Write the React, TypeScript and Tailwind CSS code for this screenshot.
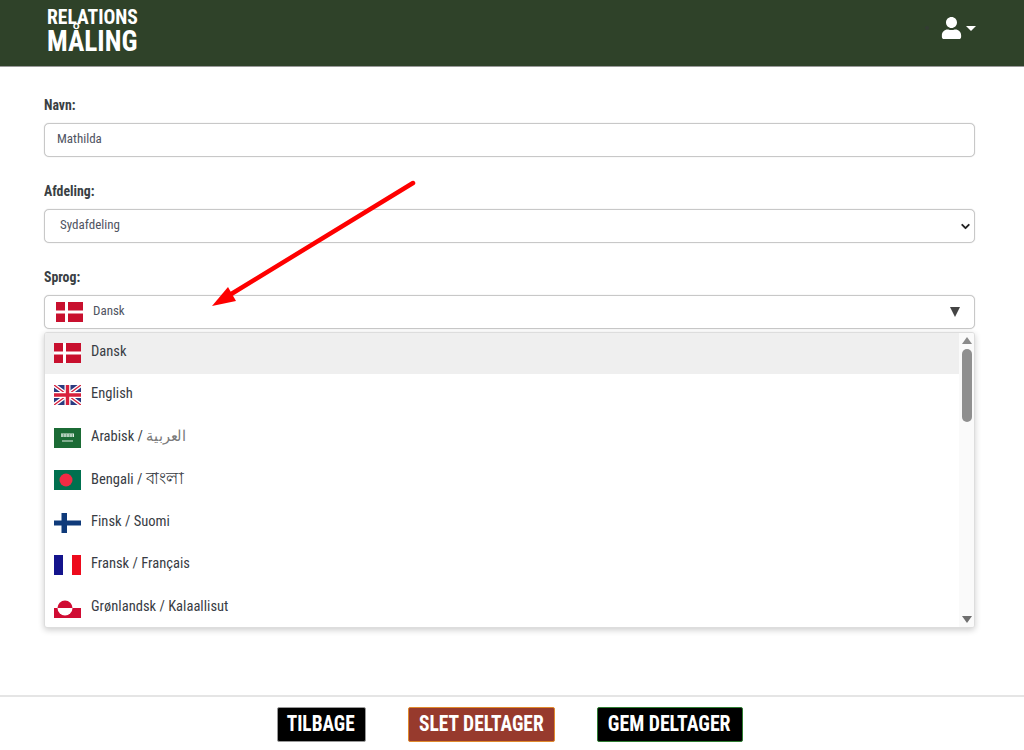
import React from "react";
import { ChevronDown } from "lucide-react";
import { FaUser } from "react-icons/fa";

const Denmark = () => (
  <svg viewBox="0 0 27 20" className="w-[27px] h-[20px] shrink-0">
    <rect width="27" height="20" fill="#c8102e" />
    <rect x="9" width="3" height="20" fill="#fff" />
    <rect y="8.5" width="27" height="3" fill="#fff" />
  </svg>
);

const Uk = () => (
  <svg viewBox="0 0 27 20" className="w-[27px] h-[20px] shrink-0">
    <rect width="27" height="20" fill="#2b3a80" />
    <path d="M0 0L27 20M27 0L0 20" stroke="#fff" strokeWidth="4" />
    <path d="M0 0L27 20M27 0L0 20" stroke="#d8203c" strokeWidth="1.4" />
    <path d="M13.5 0V20M0 10H27" stroke="#fff" strokeWidth="6" />
    <path d="M13.5 0V20M0 10H27" stroke="#d8203c" strokeWidth="3.4" />
  </svg>
);

const Saudi = () => (
  <svg viewBox="0 0 27 20" className="w-[27px] h-[20px] shrink-0">
    <rect width="27" height="20" fill="#1b6b35" />
    <path d="M7 6h13M7 8h13M8 6v3M11 6v3M14 6v3M17 6v3M19.5 6v3" stroke="#e4efe7" strokeWidth="1" />
    <rect x="8" y="12.5" width="11" height="1" fill="#e4efe7" />
  </svg>
);

const Bangladesh = () => (
  <svg viewBox="0 0 27 20" className="w-[27px] h-[20px] shrink-0">
    <rect width="27" height="20" fill="#00704f" />
    <circle cx="12" cy="10" r="6.5" fill="#ef2b44" />
  </svg>
);

const Finland = () => (
  <svg viewBox="0 0 27 20" className="w-[27px] h-[20px] shrink-0">
    <rect width="27" height="20" fill="#fff" />
    <rect x="7.5" width="5.5" height="20" fill="#0f3a7a" />
    <rect y="7.5" width="27" height="5" fill="#0f3a7a" />
  </svg>
);

const France = () => (
  <svg viewBox="0 0 27 20" className="w-[27px] h-[20px] shrink-0">
    <rect width="9" height="20" fill="#14148c" />
    <rect x="9" width="9" height="20" fill="#fff" />
    <rect x="18" width="9" height="20" fill="#ed0a1c" />
  </svg>
);

const Greenland = () => (
  <svg viewBox="0 0 27 20" className="w-[27px] h-[20px] shrink-0">
    <rect width="27" height="10" fill="#fff" />
    <rect y="10" width="27" height="10" fill="#d00c33" />
    <path d="M3.5 10a7.5 7.5 0 0 1 15 0z" fill="#d00c33" />
    <path d="M3.5 10a7.5 7.5 0 0 0 15 0z" fill="#fff" />
  </svg>
);

const languages: { label: React.ReactNode; key: string; flag: React.ReactNode; active?: boolean }[] = [
  { key: "da", label: "Dansk", flag: <Denmark />, active: true },
  { key: "en", label: "English", flag: <Uk /> },
  {
    key: "ar",
    label: (
      <>
        Arabisk / <span className="text-[#7a7a7a]">العربية</span>
      </>
    ),
    flag: <Saudi />,
  },
  {
    key: "bn",
    label: (
      <>
        Bengali / <span className="text-[17px]">বাংলা</span>
      </>
    ),
    flag: <Bangladesh />,
  },
  { key: "fi", label: "Finsk / Suomi", flag: <Finland /> },
  { key: "fr", label: "Fransk / Français", flag: <France /> },
  { key: "kl", label: "Grønlandsk / Kalaallisut", flag: <Greenland /> },
];

const Label = ({ children }: { children: React.ReactNode }) => (
  <div className="text-[15px] leading-[18px] font-bold text-[#3a3f44] mb-[9px] origin-left [transform:scaleX(0.92)]">
    {children}
  </div>
);

const boxClass =
  "h-[34px] border border-[#c8c8c8] shadow-[0_0_1px_rgba(0,0,0,0.25)] rounded-[5px] bg-white flex items-center text-[13px] text-[#4f5462]";

export default function App() {
  return (
    <div className="h-[750px] w-[1024px] bg-white flex flex-col overflow-hidden relative font-['Liberation_Sans_Narrow','Roboto_Condensed','Roboto',sans-serif]">
      {/* Header */}
      <header className="h-[67px] bg-[#2f4229] border-b border-[#999] flex items-start justify-between pl-[47px] pr-[48px] shrink-0">
        <div className="text-white font-bold pt-[8px]">
          <div className="text-[20px] leading-[19px] whitespace-nowrap origin-left [transform:scaleX(0.98)]">RELATIONS</div>
          <div className="text-[30px] leading-[28px] whitespace-nowrap origin-left [transform:scaleX(0.91)]">MÅLING</div>
        </div>
        <div className="flex items-center gap-[4px] text-white pt-[17px]">
          <div className="w-[4px] h-[4px] rounded-full bg-[#333c33] mr-[8px]" />
          <FaUser className="w-[21px] h-[22px]" />
          <div className="w-0 h-0 border-x-[5px] border-x-transparent border-t-[5px] border-t-white" />
        </div>
      </header>

      {/* Form */}
      <main className="flex-1 pl-[44px] pr-[49px] pt-[29px]">
        <Label>Navn:</Label>
        <div className={`${boxClass} px-[12px]`}>
          <span className="pb-[3px] origin-left">Mathilda</span>
        </div>

        <div className="mt-[25px]">
          <Label>Afdeling:</Label>
          <div className={`${boxClass} pl-[15px] pr-[2px] justify-between`}>
            <span className="pb-[3px] origin-left">Sydafdeling</span>
            <ChevronDown className="w-[13px] h-[13px] text-[#222]" strokeWidth={3.5} />
          </div>
        </div>

        <div className="mt-[25px] relative">
          <Label>Sprog:</Label>
          <div className={`${boxClass} pl-[11px] pr-[14px] justify-between`}>
            <div className="flex items-center gap-[10px]">
              <Denmark />
              <span className="pb-[2px] origin-left">Dansk</span>
            </div>
            <div className="w-0 h-0 border-x-[5px] border-x-transparent border-t-[10px] border-t-[#444]" />
          </div>

          {/* Dropdown */}
          <div className="absolute left-0 right-0 top-[64px] h-[296px] bg-white border border-[#ddd] rounded-[3px] shadow-[0_2px_6px_rgba(0,0,0,0.2)] flex overflow-hidden">
            <div className="flex-1 -mt-[1.5px]">
              {languages.map((lang) => (
                <div
                  key={lang.key}
                  className={`h-[42.5px] flex items-center gap-[10px] pl-[9px] text-[15px] text-[#383c44] ${
                    lang.active ? "bg-[#efefef]" : ""
                  }`}
                >
                  {lang.flag}
                  <span className="pb-[4px] origin-left [transform:scaleX(0.97)] whitespace-nowrap">{lang.label}</span>
                </div>
              ))}
            </div>
            <div className="w-[15px] bg-[#fafafa] flex flex-col items-center justify-between pt-[4px] pb-[4px]">
              <div className="flex flex-col items-center gap-[5px]">
                <div className="w-0 h-0 border-x-[5px] border-x-transparent border-b-[7px] border-b-[#8a8a8a]" />
                <div className="w-[10px] h-[73px] rounded-full bg-[#8f8f8f]" />
              </div>
              <div className="w-0 h-0 border-x-[5px] border-x-transparent border-t-[7px] border-t-[#6e6e6e]" />
            </div>
          </div>
        </div>
      </main>

      {/* Footer */}
      <footer className="h-[55px] shrink-0 border-t-2 border-[#e5e5e5] flex justify-center items-start gap-[42px] pt-[10px] pr-[5px] text-white font-bold text-[22px]">
        <button className="h-[35px] w-[89px] bg-black border border-[#999] rounded-[2px] flex items-center justify-center">
          <span className="pb-[2px] [transform:scaleX(0.88)] whitespace-nowrap">TILBAGE</span>
        </button>
        <button className="h-[35px] w-[147px] bg-[#973a2d] border border-[#e08a2c] rounded-[2px] flex items-center justify-center">
          <span className="pb-[2px] [transform:scaleX(0.886)] whitespace-nowrap">SLET DELTAGER</span>
        </button>
        <button className="h-[35px] w-[146px] bg-black border border-[#2e7d32] rounded-[2px] flex items-center justify-center">
          <span className="pb-[2px] [transform:scaleX(0.9)] whitespace-nowrap">GEM DELTAGER</span>
        </button>
      </footer>

      {/* Red annotation arrow over the form */}
      <svg className="absolute left-0 top-0 w-[1024px] h-[750px] pointer-events-none" viewBox="0 0 1024 750">
        <path d="M413 183L228 296" stroke="#fe0000" strokeWidth="4.5" strokeLinecap="round" fill="none" />
        <path d="M212 306L228 287L236 301Z" fill="#fe0000" />
      </svg>
    </div>
  );
}
